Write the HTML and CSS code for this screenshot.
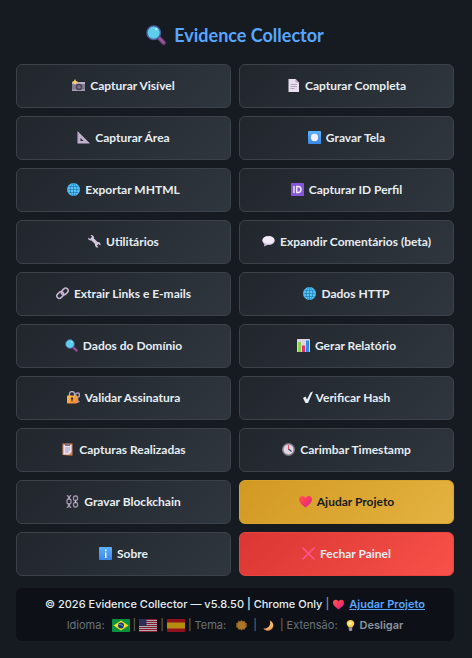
FILE: index.html
```html
<!DOCTYPE html>
<html lang="pt-BR">
<head>
    <meta charset="UTF-8">
    <meta name="viewport" content="width=device-width, initial-scale=1.0">
    <title>Evidence Collector</title>
    <link rel="stylesheet" href="styles.css">
</head>
<body>
    <!-- Ícones reutilizados -->
    <svg class="sprite" aria-hidden="true">
        <defs>
            <linearGradient id="gradCoracao" x1="0" y1="0" x2="1" y2="1">
                <stop offset="0" stop-color="#ff5a4f"/>
                <stop offset="0.5" stop-color="#f8355f"/>
                <stop offset="1" stop-color="#c927b8"/>
            </linearGradient>
            <linearGradient id="gradAzul" x1="0" y1="0" x2="0" y2="1">
                <stop offset="0" stop-color="#5cb2fb"/>
                <stop offset="1" stop-color="#3c86ea"/>
            </linearGradient>
            <linearGradient id="gradOuro" x1="0" y1="0" x2="1" y2="1">
                <stop offset="0" stop-color="#fdc54a"/>
                <stop offset="1" stop-color="#f08232"/>
            </linearGradient>
        </defs>
        <symbol id="lupa" viewBox="0 0 26 26">
            <path d="M16 16l7 7" stroke="#7d4386" stroke-width="5.4" stroke-linecap="round"/>
            <path d="M17.500 17.500l5 5" stroke="#a25c9e" stroke-width="2" stroke-linecap="round"/>
            <circle cx="10" cy="10" r="8.800" fill="#5fcdec" stroke="#4a5f9c" stroke-width="1.800"/>
            <circle cx="13.500" cy="5.500" r="1.500" fill="#c4f1fb"/>
        </symbol>
        <symbol id="globo" viewBox="0 0 26 26">
            <circle cx="13" cy="13" r="13" fill="#52c6fc"/>
            <path d="M13 1v24M1 13h24M3 7h20M3 19h20" fill="none" stroke="#216f9f" stroke-width="1.200"/>
            <ellipse cx="13" cy="13" rx="6.500" ry="12" fill="none" stroke="#216f9f" stroke-width="1.200"/>
        </symbol>
        <symbol id="coracao" viewBox="0 0 26 26">
            <path d="M13 25C8 21 0 16 0 8.500 0 4.500 3 2 6.500 2 9.500 2 12 3.700 13 6c1-2.300 3.500-4 6.500-4C23 2 26 4.500 26 8.500 26 16 18 21 13 25z" fill="url(#gradCoracao)"/>
        </symbol>
    </svg>

    <main class="painel">
        <h1 class="titulo">
            <svg class="titulo-icone"><use href="#lupa"/></svg>
            Evidence Collector
        </h1>

        <div class="grade">
            <button class="botao" type="button">
                <svg class="icone" viewBox="0 0 26 26">
                    <rect y="6" width="26" height="18" rx="1" fill="#837b8e"/>
                    <path d="M0 6h26v4H0z" fill="#b9aec5"/>
                    <path d="M0 21h26v3H0z" fill="#a99db6"/>
                    <circle cx="14" cy="16" r="6.500" fill="#4a4256"/>
                    <circle cx="14" cy="16" r="3.600" fill="#7a7292"/>
                    <path d="M6 0l2 4 4 2-4 2-2 4-2-4-4-2 4-2z" fill="#ffd65a"/>
                </svg>
                Capturar Visível
            </button>
            <button class="botao" type="button">
                <svg class="icone" viewBox="0 0 26 26">
                    <path d="M3 0h14l7 7v19H3z" fill="#e9dff0"/>
                    <path d="M17 0l7 7h-7z" fill="#b5a5c4"/>
                    <path d="M7 11h13M7 15h13M7 19h8" stroke="#a798b4" stroke-width="1.600"/>
                </svg>
                Capturar Completa
            </button>
            <button class="botao" type="button">
                <svg class="icone" viewBox="0 0 26 26">
                    <path d="M1 0l25 25H1zM7 14v6h6z" fill="#bfb1cb" fill-rule="evenodd"/>
                    <path d="M1 7h3M1 12h3M1 17h3" stroke="#9b8dab" stroke-width="1.200"/>
                </svg>
                Capturar Área
            </button>
            <button class="botao" type="button">
                <svg class="icone" viewBox="0 0 26 26">
                    <rect width="26" height="26" rx="1.500" fill="url(#gradAzul)"/>
                    <circle cx="13" cy="13" r="7.300" fill="#f5efff"/>
                </svg>
                Gravar Tela
            </button>
            <button class="botao" type="button">
                <svg class="icone"><use href="#globo"/></svg>
                Exportar MHTML
            </button>
            <button class="botao" type="button">
                <svg class="icone" viewBox="0 0 26 26">
                    <rect width="26" height="26" rx="1.500" fill="#8658d9"/>
                    <path d="M6 6v14M11.500 7v12H14c8 0 8-12 0-12z" fill="none" stroke="#f1e9ff" stroke-width="2.800"/>
                </svg>
                Capturar ID Perfil
            </button>
            <button class="botao" type="button">
                <svg class="icone" viewBox="0 0 26 26">
                    <path d="M5 0c4-1 8 3 7 7l7 7c4-1 7 3 6 7l-4-3-3 3 3 4c-4 1-8-2-7-7l-7-7c-4 1-7-2-7-6l4 3 4-4z" fill="#d3c6dd"/>
                </svg>
                Utilitários
            </button>
            <button class="botao" type="button">
                <svg class="icone" viewBox="0 0 26 26">
                    <path d="M5 15l-1 8 9-4z" fill="#c8b5d6"/>
                    <ellipse cx="13" cy="11" rx="12.500" ry="9" fill="#d3c3de"/>
                    <ellipse cx="13" cy="10" rx="11.500" ry="7.500" fill="#f3eaf7"/>
                </svg>
                Expandir Comentários (beta)
            </button>
            <button class="botao" type="button">
                <svg class="icone" viewBox="0 0 26 26">
                    <g fill="none" stroke="#c6b6cf" stroke-width="3">
                        <rect x="1" y="11" width="15" height="10" rx="5" transform="rotate(-45 8.500 16)"/>
                        <rect x="10" y="4" width="15" height="10" rx="5" transform="rotate(-45 17.500 9)"/>
                    </g>
                </svg>
                Extrair Links e E-mails
            </button>
            <button class="botao" type="button">
                <svg class="icone"><use href="#globo"/></svg>
                Dados HTTP
            </button>
            <button class="botao" type="button">
                <svg class="icone"><use href="#lupa"/></svg>
                Dados do Domínio
            </button>
            <button class="botao" type="button">
                <svg class="icone" viewBox="0 0 26 26">
                    <rect width="26" height="26" rx="1" fill="#ddd3e4"/>
                    <path d="M2 6h6v20H2z" fill="#8ad34a"/>
                    <path d="M10 13h6v13h-6z" fill="#e62e70"/>
                    <path d="M18 3h6v23h-6z" fill="#2f8be4"/>
                </svg>
                Gerar Relatório
            </button>
            <button class="botao" type="button">
                <svg class="icone" viewBox="0 0 26 26">
                    <circle cx="21" cy="8" r="4" fill="none" stroke="#a99cba" stroke-width="3"/>
                    <path d="M21 12v12M21 21h4" stroke="#a99cba" stroke-width="3"/>
                    <path d="M5 11V6a5 5 0 0 1 10 0v5" fill="none" stroke="#b6acc2" stroke-width="2.600"/>
                    <rect x="0" y="9" width="20" height="16" rx="1.500" fill="url(#gradOuro)"/>
                    <circle cx="10" cy="15" r="2.400" fill="#49343c"/>
                    <path d="M10 15v6" stroke="#49343c" stroke-width="2.400"/>
                </svg>
                Validar Assinatura
            </button>
            <button class="botao botao-check" type="button">
                <svg class="icone icone-check" viewBox="0 0 20 26">
                    <path d="M0 14l5-3 3 6L15 3l5-2L10 24H5z" fill="#e6edf3"/>
                </svg>
                Verificar Hash
            </button>
            <button class="botao" type="button">
                <svg class="icone" viewBox="0 0 26 26">
                    <path d="M3 1h20v24h-6l-14-1z" fill="#d98250"/>
                    <path d="M5 4h16v14l-5 5H5z" fill="#e9dfef"/>
                    <path d="M8 1h10v5H8z" fill="#7c7488"/>
                    <path d="M8 10h10M8 14h10M8 18h7" stroke="#9b8daa" stroke-width="1.600"/>
                </svg>
                Capturas Realizadas
            </button>
            <button class="botao" type="button">
                <svg class="icone" viewBox="0 0 26 26">
                    <circle cx="13" cy="13" r="11.500" fill="#e0d8e4" stroke="#827985" stroke-width="3"/>
                    <path d="M13 4v9" stroke="#e2566c" stroke-width="2.400"/>
                    <path d="M13 12l6 5" stroke="#47405a" stroke-width="2.400"/>
                </svg>
                Carimbar Timestamp
            </button>
            <button class="botao" type="button">
                <svg class="icone" viewBox="0 0 26 26">
                    <g fill="none" stroke="#a494b2" stroke-width="2.600">
                        <path d="M2 0l4 5 4-5M2 26l4-5 4 5"/>
                        <rect x="2" y="8" width="8" height="10" rx="3"/>
                        <rect x="15" y="2" width="8" height="9" rx="3"/>
                        <rect x="15" y="15" width="8" height="9" rx="3"/>
                    </g>
                    <path d="M6 4v5M6 17v5M19 10v6" stroke="#d2c6dc" stroke-width="2"/>
                </svg>
                Gravar Blockchain
            </button>
            <button class="botao botao-ajudar" type="button">
                <svg class="icone"><use href="#coracao"/></svg>
                Ajudar Projeto
            </button>
            <button class="botao" type="button">
                <svg class="icone" viewBox="0 0 26 26">
                    <rect width="26" height="26" rx="1.500" fill="url(#gradAzul)"/>
                    <path d="M13.500 5v3.500M13.500 11v11" stroke="#f5f3ff" stroke-width="3"/>
                </svg>
                Sobre
            </button>
            <button class="botao botao-fechar" type="button">
                <svg class="icone" viewBox="0 0 26 26">
                    <path d="M2 2l22 22M24 2L2 24" stroke="#ff5593" stroke-width="3.200" stroke-linecap="round"/>
                </svg>
                Fechar Painel
            </button>
        </div>

        <footer class="rodape">
            <div class="linha linha-creditos">
                <span>© 2026 Evidence Collector — v5.8.50 | Chrome Only</span>
                <span class="barra">|</span>
                <a class="link-ajudar" href="#ajudar"><svg class="icone-mini"><use href="#coracao"/></svg><span>Ajudar Projeto</span></a>
            </div>
            <div class="linha linha-opcoes">
                <span class="rotulo">Idioma:</span>
                <button class="opcao" type="button" aria-label="Português">
                    <svg class="bandeira" viewBox="0 0 36 26">
                        <rect width="36" height="26" rx="1.500" fill="#08923f"/>
                        <path d="M18 3l15 10-15 10L3 13z" fill="#f8dc1e"/>
                        <circle cx="18" cy="13" r="6" fill="#153a80"/>
                        <path d="M13 11q6-1 10 4" fill="none" stroke="#b9cbe0" stroke-width="1.200"/>
                    </svg>
                </button>
                <span>|</span>
                <button class="opcao opcao-inativa" type="button" aria-label="English">
                    <svg class="bandeira" viewBox="0 0 36 26">
                        <rect width="36" height="26" rx="1.500" fill="#eee"/>
                        <path d="M0 1h36M0 5h36M0 9h36M0 13h36M0 17h36M0 21h36M0 25h36" stroke="#c51f3c" stroke-width="2"/>
                        <path d="M0 0h15v14H0z" fill="#3c3b78"/>
                    </svg>
                </button>
                <span>|</span>
                <button class="opcao opcao-inativa" type="button" aria-label="Español">
                    <svg class="bandeira" viewBox="0 0 36 26">
                        <rect width="36" height="26" rx="1.500" fill="#c8101e"/>
                        <path d="M0 7h36v12H0z" fill="#fcc00c"/>
                    </svg>
                </button>
                <span>|</span>
                <span class="rotulo">Tema:</span>
                <button class="opcao opcao-tema opcao-inativa" type="button" aria-label="Tema claro">
                    <svg class="icone-mini" viewBox="0 0 26 26">
                        <path d="M13 0l3 3 4-1 2 4 4 2-1 4 1 4-4 3-2 4-4-1-3 3-3-3-4 1-2-4-4-3 1-4-1-4 4-2 2-4 4 1z" fill="#c98d2a"/>
                        <circle cx="13" cy="13" r="9" fill="#f0a030"/>
                    </svg>
                </button>
                <span>|</span>
                <button class="opcao opcao-tema" type="button" aria-label="Tema escuro">
                    <svg class="icone-mini" viewBox="0 0 26 26">
                        <path d="M16 1c8 3 11 12 6 19C17 26 6 27 1 20c10 2 19-7 15-19z" fill="#f6b568"/>
                        <path d="M4 22c8 3 16 0 19-7-1 6-4 9-9 10-4 1-7 0-10-3z" fill="#c86c48"/>
                    </svg>
                </button>
                <span>|</span>
                <span class="rotulo">Extensão:</span>
                <button class="opcao opcao-desligar" type="button">
                    <svg class="icone-mini" viewBox="0 0 26 26">
                        <path d="M13 0c5 0 9 3.500 9 8 0 5-4 6-5 10H9C8 14 4 13 4 8c0-4.500 4-8 9-8z" fill="#ffce55"/>
                        <circle cx="12" cy="8" r="4" fill="#fff0a4"/>
                        <path d="M9 18h8v6l-2 2h-4l-2-2z" fill="#9b93a5"/>
                    </svg>
                    Desligar
                </button>
            </div>
        </footer>
    </main>
</body>
</html>
```
FILE: styles.css
```css
* {
    box-sizing: border-box;
}

body {
    margin: 0;
    background-color: #161b22;
    color: #e6edf3;
    font-family: Inter, "Liberation Sans", sans-serif;
}

.sprite {
    position: absolute;
    width: 0;
    height: 0;
}

.painel {
    padding: 22px 18px 16px 16px;
}

.titulo {
    display: flex;
    justify-content: center;
    align-items: center;
    gap: 8px;
    margin: 0 0 16px;
    color: #58a6ff;
    font-family: Lato, "Open Sans", sans-serif;
    font-size: 18px;
    font-weight: 700;
    line-height: 26px;
}

.titulo-icone {
    width: 20px;
    height: 20px;
}

.grade {
    display: grid;
    grid-template-columns: 1fr 1fr;
    gap: 8px;
}

.botao {
    display: flex;
    justify-content: center;
    align-items: center;
    gap: 5px;
    height: 44px;
    padding: 0 8px 2px;
    border: 1px solid #3d4249;
    border-radius: 6px;
    background: linear-gradient(135deg, #21262d, #30363d);
    color: #e6edf3;
    font-family: Lato, "Open Sans", sans-serif;
    font-size: 12px;
    font-weight: 700;
    white-space: nowrap;
    cursor: pointer;
}

.botao:hover {
    border-color: #58a6ff;
}

.botao-check {
    gap: 3px;
}

.botao-ajudar {
    border-color: #d9a32f;
    background: linear-gradient(135deg, #d29922, #e3b341);
    color: #161b22;
}

.botao-fechar {
    border-color: #e8443f;
    background: linear-gradient(135deg, #da3633, #f85149);
}

.icone {
    flex: none;
    width: 13px;
    height: 13px;
}

.icone-check {
    width: 10px;
}

.rodape {
    margin-top: 12px;
    padding: 6px 8px 5px;
    border-radius: 6px;
    background-color: #0d1117;
    font-size: 11px;
    line-height: 21px;
}

.linha {
    display: flex;
    justify-content: center;
    align-items: center;
    gap: 3px;
    white-space: nowrap;
}

.linha-creditos {
    font-weight: 500;
}

.barra {
    color: #8b949e;
}

.link-ajudar {
    display: flex;
    align-items: center;
    gap: 5px;
    padding-left: 1px;
    color: #58a6ff;
    font-weight: 600;
    text-decoration: none;
}

.link-ajudar span {
    text-decoration: underline;
}

.linha-opcoes {
    color: #6a717a;
}

.rotulo {
    margin-right: 4px;
}

.opcao {
    display: flex;
    align-items: center;
    gap: 4px;
    padding: 0;
    border: none;
    background: none;
    color: #8b949e;
    font: inherit;
    cursor: pointer;
}

.opcao-inativa {
    opacity: 0.7;
}

.opcao-tema {
    padding: 0 3px;
}

.opcao-desligar {
    font-weight: 600;
}

.bandeira {
    width: 18px;
    height: 13px;
}

.icone-mini {
    flex: none;
    width: 11px;
    height: 11px;
}
```
